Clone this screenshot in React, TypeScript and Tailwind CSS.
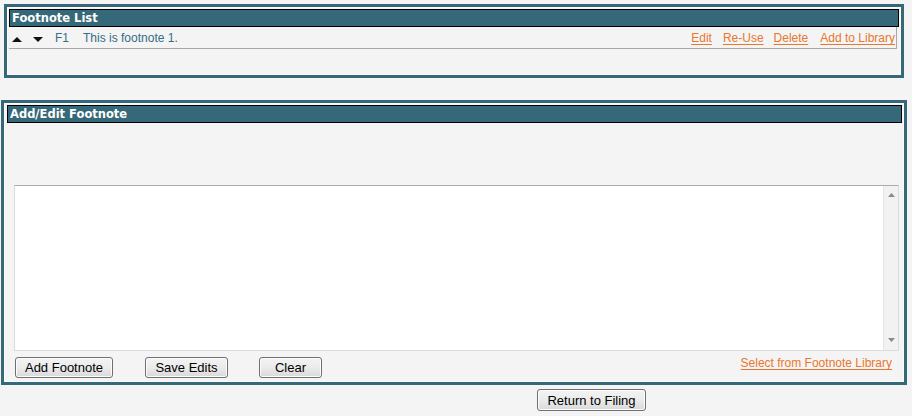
import React from "react";

const Tri = ({down}: {down?: boolean}) => (
    <svg width="10" height="5" viewBox="0 0 10 5" className="block">
        {down ? <polygon points="0,0 10,0 5,5" fill="#111"/> : <polygon points="0,5 10,5 5,0" fill="#111"/>}
    </svg>
)

const Btn = ({label, w}: {label: string, w: string}) => (
    <button
        className={`${w} block rounded-[3px] border border-[#707070] bg-gradient-to-b from-[#f3f3f3] via-[#ebebeb] to-[#d9d9d9] text-[13px] text-black leading-none shadow-[inset_0_0_0_1px_#fcfcfc]`}
    >
        {label}
    </button>
)

const Header = ({title, cls}: {title: string, cls: string}) => (
    <div
        className={`${cls} h-[18px] bg-[#356878] border border-black text-white font-bold text-[11.5px] leading-[16px] pl-[2px] font-['DejaVu_Sans',sans-serif]`}
    >
        {title}
    </div>
)

const A = ({children}: {children: React.ReactNode}) => (
    <a className="text-[#e8772e] underline underline-offset-[2px] cursor-pointer">{children}</a>
)

export default function App() {
    return (
        <div className="w-[912px] h-[416px] bg-[#f4f4f4] font-['Liberation_Sans',Arial,sans-serif] pt-[4px] overflow-hidden">
            {/* footnote list */}
            <div className="ml-[4px] w-[900px] h-[74px] border-[3px] border-[#356878]">
                <div className="h-full border border-[#fafafa] pt-[1px] pl-[1px] pr-[1px]">
                    <Header title="Footnote List" cls=""/>
                    <div className="mr-[2px] h-[22px] border-b border-r border-[#a8a8a8] flex items-center text-[12px] text-[#356d84]">
                        <div className="flex items-center gap-[11px] pl-[3px] pt-[3px]">
                            <Tri/>
                            <Tri down/>
                        </div>
                        <span className="ml-[12px]">F1</span>
                        <span className="ml-[14px]">This is footnote 1.</span>
                        <div className="ml-auto flex gap-[10px] pr-[1px] pt-[1px]">
                            <span className="mr-[1px]"><A>Edit</A></span>
                            <A>Re-Use</A>
                            <A>Delete</A>
                            <span className="ml-[2px]"><A>Add to Library</A></span>
                        </div>
                    </div>
                </div>
            </div>

            {/* add / edit */}
            <div className="ml-[1px] mt-[22px] w-[906px] h-[285px] border-[3px] border-[#356878]">
                <div className="h-full border border-[#fafafa] pt-[1px] flex flex-col">
                    <Header title="Add/Edit Footnote" cls="ml-[2px] mr-[1px]"/>
                    <div className="ml-[9px] mt-[62px] w-[885px] h-[166px] bg-white border border-[#dcdcdc] border-t-[#ababab] flex">
                        <div className="flex-1"/>
                        <div className="w-[15px] bg-[#f2f2f2] border-l border-[#e6e6e6] flex flex-col items-center justify-between pt-[7px] pb-[8px]">
                            <svg width="7" height="4" viewBox="0 0 7 4"><polygon points="0,4 7,4 3.5,0" fill="#8a8a8a"/></svg>
                            <svg width="7" height="4" viewBox="0 0 7 4"><polygon points="0,0 7,0 3.5,4" fill="#8a8a8a"/></svg>
                        </div>
                    </div>
                    <div className="mt-[6px] ml-[10px] flex items-start">
                        <Btn label="Add Footnote" w="w-[98px] h-[21px]"/>
                        <div className="ml-[32px] flex"><Btn label="Save Edits" w="w-[83px] h-[21px]"/></div>
                        <div className="ml-[31px] flex"><Btn label="Clear" w="w-[63px] h-[21px]"/></div>
                        <div className="ml-auto mr-[11px] mt-[-1px] text-[12px] leading-[14px]">
                            <A>Select from Footnote Library</A>
                        </div>
                    </div>
                </div>
            </div>

            <div className="mt-[4px] pl-[537px] flex">
                <Btn label="Return to Filing" w="w-[109px] h-[22px]"/>
            </div>
        </div>
    )
}
